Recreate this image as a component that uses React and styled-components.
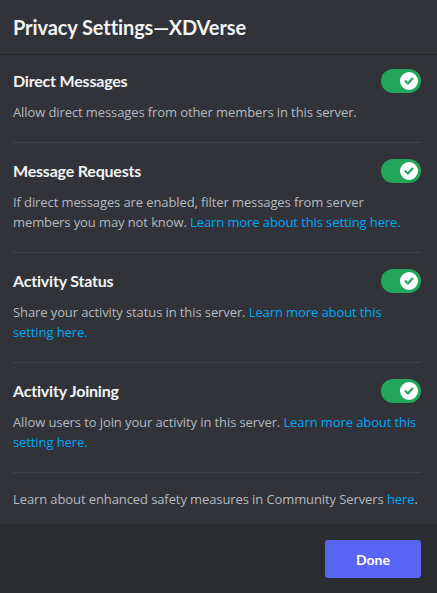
import React from 'react';
import styled, { createGlobalStyle } from 'styled-components';

const GlobalStyle = createGlobalStyle`
  html, body {
    margin: 0;
    padding: 0;
    background: #313338;
  }
  body {
    font-family: "Open Sans", "Liberation Sans", sans-serif;
    -webkit-font-smoothing: antialiased;
  }
`;

const settings = [
  {
    title: 'Direct Messages',
    text: 'Allow direct messages from other members in this server.',
  },
  {
    title: 'Message Requests',
    text: 'If direct messages are enabled, filter messages from server members you may not know.',
    link: 'Learn more about this setting here.',
  },
  {
    title: 'Activity Status',
    text: 'Share your activity status in this server.',
    link: 'Learn more about this setting here.',
  },
  {
    title: 'Activity Joining',
    text: 'Allow users to join your activity in this server.',
    link: 'Learn more about this setting here.',
  },
];

export default function App() {
  return (
    <>
      <GlobalStyle />
      <Modal>
        <Header>
          <Title>Privacy Settings—XDVerse</Title>
        </Header>
        <Content>
          {settings.map((s, i) => (
            <Section key={s.title} $first={i === 0}>
              <Row>
                <SettingTitle>{s.title}</SettingTitle>
                <Switch>
                  <Knob>
                    <svg width="12" height="12" viewBox="0 0 12 12">
                      <path
                        d="M2.6 6.2 L5 8.5 L9.4 3.6"
                        fill="none"
                        stroke="#23a55a"
                        strokeWidth="2.2"
                        strokeLinecap="round"
                        strokeLinejoin="round"
                      />
                    </svg>
                  </Knob>
                </Switch>
              </Row>
              <Description>
                {s.text}
                {s.link && (
                  <>
                    {' '}
                    <Link href="#">{s.link}</Link>
                  </>
                )}
              </Description>
            </Section>
          ))}
          <Note>
            Learn about enhanced safety measures in Community Servers{' '}
            <Link href="#">here</Link>.
          </Note>
        </Content>
        <Footer>
          <DoneButton>Done</DoneButton>
        </Footer>
      </Modal>
    </>
  );
}

const Modal = styled.div`
  width: 437px;
  height: 593px;
  display: flex;
  flex-direction: column;
  background: #313338;
  overflow: hidden;
`;

const Header = styled.div`
  flex-shrink: 0;
  height: 54px;
  padding: 0 16px 0 13px;
  display: flex;
  align-items: center;
  border-bottom: 1px solid #26272b;
`;

const Title = styled.h1`
  margin: 0;
  font-family: Lato, "Open Sans", sans-serif;
  font-size: 20px;
  line-height: 24px;
  font-weight: 700;
  letter-spacing: -0.1px;
  color: #f2f3f5;
`;

const Content = styled.div`
  flex: 1;
  min-height: 0;
  padding: 0 16px 0 13px;
`;

const Section = styled.div`
  padding: ${(p) => (p.$first ? '16px' : '18px')} 0 20px;
  border-bottom: 1px solid #3f4147;
`;

const Row = styled.div`
  display: flex;
  align-items: center;
  justify-content: space-between;
  height: 20px;
`;

const SettingTitle = styled.div`
  font-family: Lato, "Open Sans", sans-serif;
  font-size: 16px;
  line-height: 20px;
  font-weight: 700;
  letter-spacing: -0.2px;
  color: #f2f3f5;
`;

const Switch = styled.div`
  width: 40px;
  height: 24px;
  border-radius: 12px;
  background: #23a55a;
  display: flex;
  align-items: center;
  justify-content: flex-end;
  padding: 0 3px;
  box-sizing: border-box;
`;

const Knob = styled.div`
  width: 18px;
  height: 18px;
  border-radius: 50%;
  background: #fff;
  display: flex;
  align-items: center;
  justify-content: center;
`;

const Description = styled.p`
  margin: 11px 0 0;
  font-size: 13px;
  line-height: 20px;
  letter-spacing: -0.1px;
  color: #b5bac1;
`;

const Link = styled.a`
  color: #00a8fc;
  text-decoration: none;
`;

const Note = styled.p`
  margin: 16px 0 15px;
  font-size: 13px;
  line-height: 20px;
  letter-spacing: -0.1px;
  color: #b5bac1;
`;

const Footer = styled.div`
  flex-shrink: 0;
  background: #2b2d31;
  padding: 16px 16px 15px;
  display: flex;
  justify-content: flex-end;
`;

const DoneButton = styled.button`
  width: 96px;
  height: 38px;
  border: none;
  border-radius: 3px;
  background: #5865f2;
  color: #fff;
  font-family: Lato, "Open Sans", sans-serif;
  font-size: 14px;
  font-weight: 700;
  cursor: pointer;
`;
